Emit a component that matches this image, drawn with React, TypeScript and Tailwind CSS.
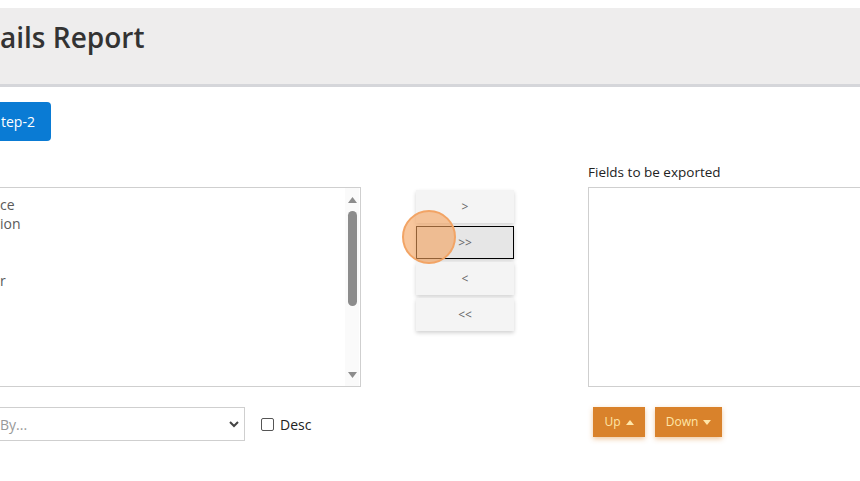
import React from 'react';

const moveButtons = ['>', '>>', '<', '<<'];

const App: React.FC = () => {
  const [active] = React.useState<number>(1);

  return (
    <div className="w-[860px] h-[481px] overflow-hidden bg-white pt-[8px] font-['Open_Sans',sans-serif]">
      <div className="h-[79px] bg-[#eeeded] border-b-[3px] border-[#d5d6da] flex items-center">
        <h1 className="text-[28px] font-semibold text-[#333] leading-none -mt-[19px]">ails Report</h1>
      </div>

      <button className="mt-[15px] h-[39px] w-[51px] rounded-r-[4px] bg-[#0a7bd4] text-white text-[14px] text-left pl-[1px]">
        tep-2
      </button>

      <div className="mt-[21px] flex">
        {/* left column */}
        <div className="w-[361px] shrink-0">
          <div className="h-[25px]" />
          <div className="h-[200px] border border-[#cfcfcf] border-l-0 flex">
            <ul className="flex-1 pt-[7px] text-[14px] leading-[19px] text-[#5a5a5a]">
              <li>ce</li>
              <li>ion</li>
              <li>&nbsp;</li>
              <li>&nbsp;</li>
              <li>r</li>
            </ul>
            <div className="w-[14px] bg-[#fafafa] flex flex-col items-center pt-[9px] pb-[8px] mr-[1px]">
              <svg width="9" height="6" viewBox="0 0 9 6"><path d="M4.5 0 L9 6 L0 6 Z" fill="#8c8c8c" /></svg>
              <div className="mt-[8px] h-[95px] w-[9px] rounded-full bg-[#8c8c8c]" />
              <div className="flex-1" />
              <svg width="9" height="6" viewBox="0 0 9 6"><path d="M0 0 L9 0 L4.5 6 Z" fill="#8c8c8c" /></svg>
            </div>
          </div>
          <div className="mt-[20px] flex items-center">
            <div className="h-[34px] w-[245px] border border-[#cfcfcf] border-l-0 flex items-center justify-between pr-[4px]">
              <span className="text-[14px] text-[#999]">By...</span>
              <svg width="12" height="12" viewBox="0 0 12 12">
                <path d="M2 4 L6 8 L10 4" stroke="#444" strokeWidth="2" fill="none" />
              </svg>
            </div>
            <span className="ml-[16px] w-[13px] h-[13px] border border-[#555] rounded-[2px] bg-white" />
            <span className="ml-[6px] text-[14px] text-[#222]">Desc</span>
          </div>
        </div>

        {/* move buttons */}
        <div className="ml-[55px] w-[98px] shrink-0 pt-[28px] flex flex-col gap-[3px] relative">
          {moveButtons.map((label, i) => (
            <button
              key={label}
              className={`h-[33px] w-[98px] text-[12px] text-[#666] shadow-[0_2px_4px_rgba(0,0,0,0.18)] ${
                i === active ? 'bg-[#e6e6e6] border border-black' : 'bg-[#f4f4f4]'
              }`}
            >
              {label}
            </button>
          ))}
          <span className="absolute left-[-14px] top-[48px] w-[54px] h-[54px] rounded-full bg-[rgba(243,160,90,0.6)] border-2 border-[#f2a465]" />
        </div>

        {/* right column */}
        <div className="ml-[74px] w-[300px] shrink-0">
          <div className="h-[25px] text-[13.5px] text-[#222] leading-[20px]">Fields to be exported</div>
          <div className="h-[200px] border border-[#cfcfcf]" />
          <div className="mt-[20px] ml-[5px] flex gap-[10px]">
            <button className="h-[30px] w-[52px] bg-[#d9822b] text-[#ffe6a8] text-[12px] flex items-center justify-center gap-[5px] shadow-[0_2px_5px_rgba(217,130,43,0.45)]">
              Up
              <svg width="8" height="5" viewBox="0 0 8 5"><path d="M4 0 L8 5 L0 5 Z" fill="#ffe6a8" /></svg>
            </button>
            <button className="h-[30px] w-[67px] bg-[#d9822b] text-[#ffe6a8] text-[12px] flex items-center justify-center gap-[5px] shadow-[0_2px_5px_rgba(217,130,43,0.45)]">
              Down
              <svg width="8" height="5" viewBox="0 0 8 5"><path d="M0 0 L8 0 L4 5 Z" fill="#ffe6a8" /></svg>
            </button>
          </div>
        </div>
      </div>
    </div>
  );
};

export default App;
